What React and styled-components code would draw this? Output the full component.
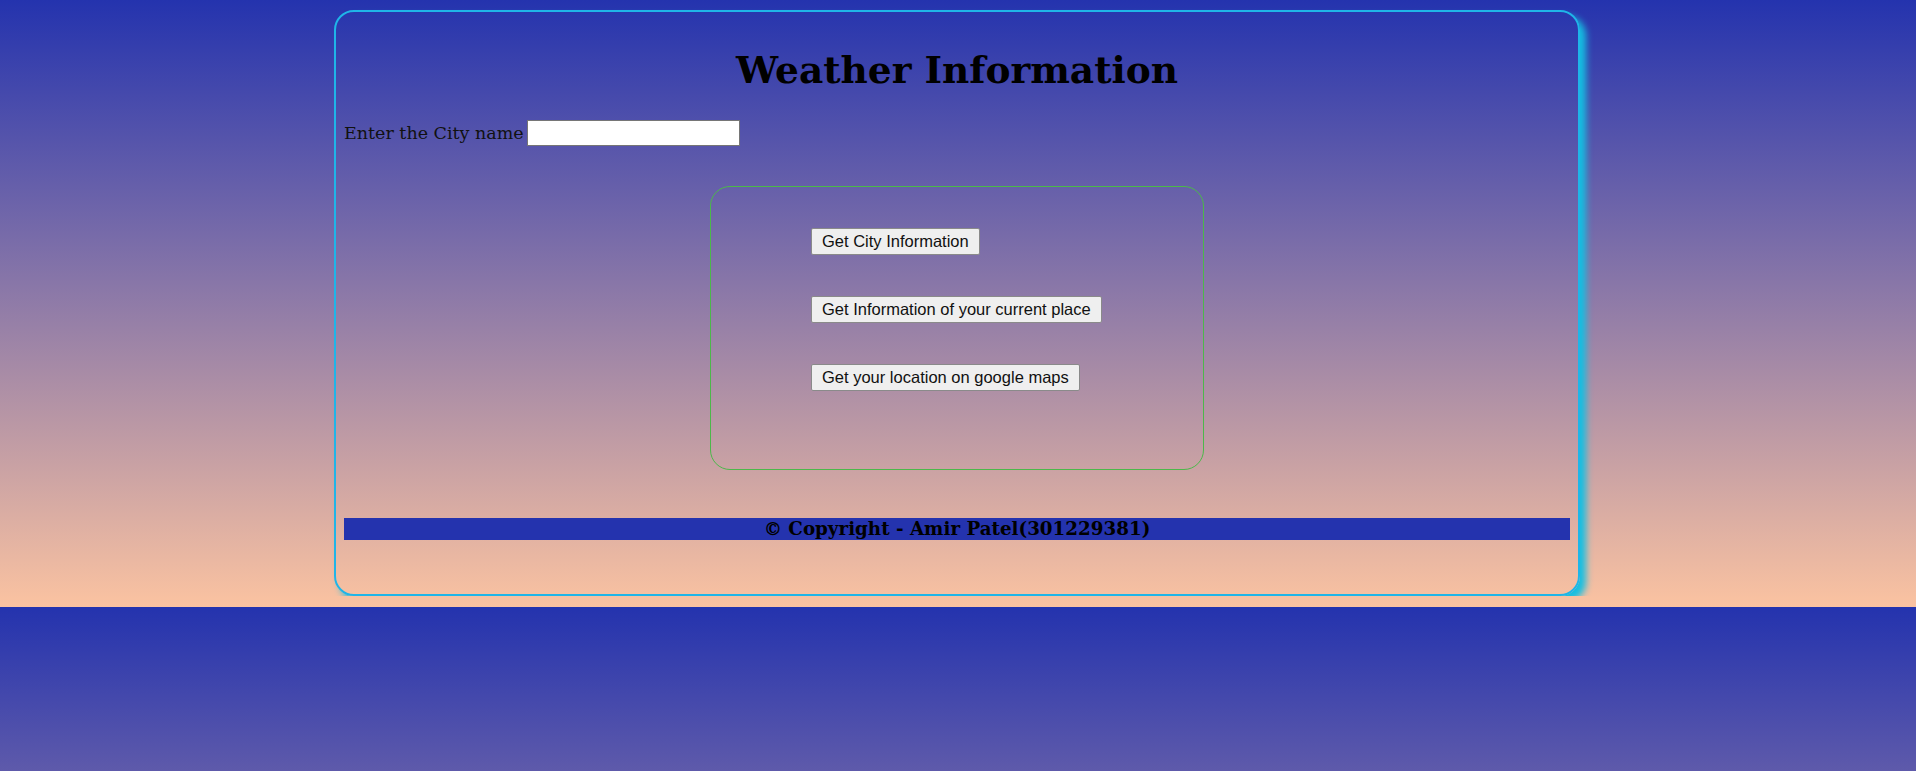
import styled, { createGlobalStyle } from "styled-components";

const GlobalStyle = createGlobalStyle`
  html, body {
    margin: 0;
  }
  body {
    padding-top: 10px;
    font-family: "DejaVu Serif", "Liberation Serif", serif;
    background: linear-gradient(to bottom, #2433ae 0%, #fbc3a1 100%);
    background-size: 100% 607px;
    background-repeat: repeat;
  }
`;

const Card = styled.div`
  box-sizing: border-box;
  width: 1246px;
  height: 586px;
  margin: 0 0 0 calc(50% - 624px);
  padding: 0 8px;
  border: 2px solid #1fb5e8;
  border-radius: 20px;
  box-shadow: 6px 6px 7px #14bfe2;
  display: flex;
  flex-direction: column;
`;

const Title = styled.h1`
  margin: 34px 0 0;
  font-size: 37.5px;
  line-height: 48px;
  font-weight: 700;
  text-align: center;
  color: #000;
`;

const SearchRow = styled.div`
  display: flex;
  align-items: center;
  gap: 3px;
  margin-top: 25px;
  height: 27px;
`;

const Label = styled.label`
  font-size: 17.5px;
  color: #111;
`;

const CityInput = styled.input`
  box-sizing: border-box;
  width: 213px;
  height: 26px;
  border: 1px solid #767676;
  background: #fff;
  padding: 1px 2px;
  font-size: 16px;
`;

const ActionBox = styled.div`
  box-sizing: border-box;
  width: 494px;
  height: 284px;
  margin: 40px auto 0;
  padding: 41px 0 0 100px;
  border: 1px solid #4cb84a;
  border-radius: 20px;
  display: flex;
  flex-direction: column;
  align-items: flex-start;
  gap: 41px;
`;

const ActionButton = styled.button`
  box-sizing: border-box;
  height: 27px;
  padding: 0 10px;
  font-family: "Liberation Sans", Arial, sans-serif;
  font-size: 16.5px;
  color: #111;
  background: #efefef;
  border: 1px solid #8a8a8a;
  border-radius: 2px;
`;

const Footer = styled.footer`
  margin-top: 48px;
  background: #2433ae;
  height: 22px;
  display: flex;
  align-items: center;
  justify-content: center;
`;

const FooterText = styled.h3`
  margin: 0;
  font-size: 18.3px;
  line-height: 22px;
  font-weight: 700;
  color: #000;
`;

export default function App() {
  return (
    <>
      <GlobalStyle />
      <Card>
        <Title>Weather Information</Title>
        <SearchRow>
          <Label htmlFor="city">Enter the City name</Label>
          <CityInput id="city" type="text" />
        </SearchRow>
        <ActionBox>
          <ActionButton>Get City Information</ActionButton>
          <ActionButton>Get Information of your current place</ActionButton>
          <ActionButton>Get your location on google maps</ActionButton>
        </ActionBox>
        <Footer>
          <FooterText>© Copyright - Amir Patel(301229381)</FooterText>
        </Footer>
      </Card>
    </>
  );
}
